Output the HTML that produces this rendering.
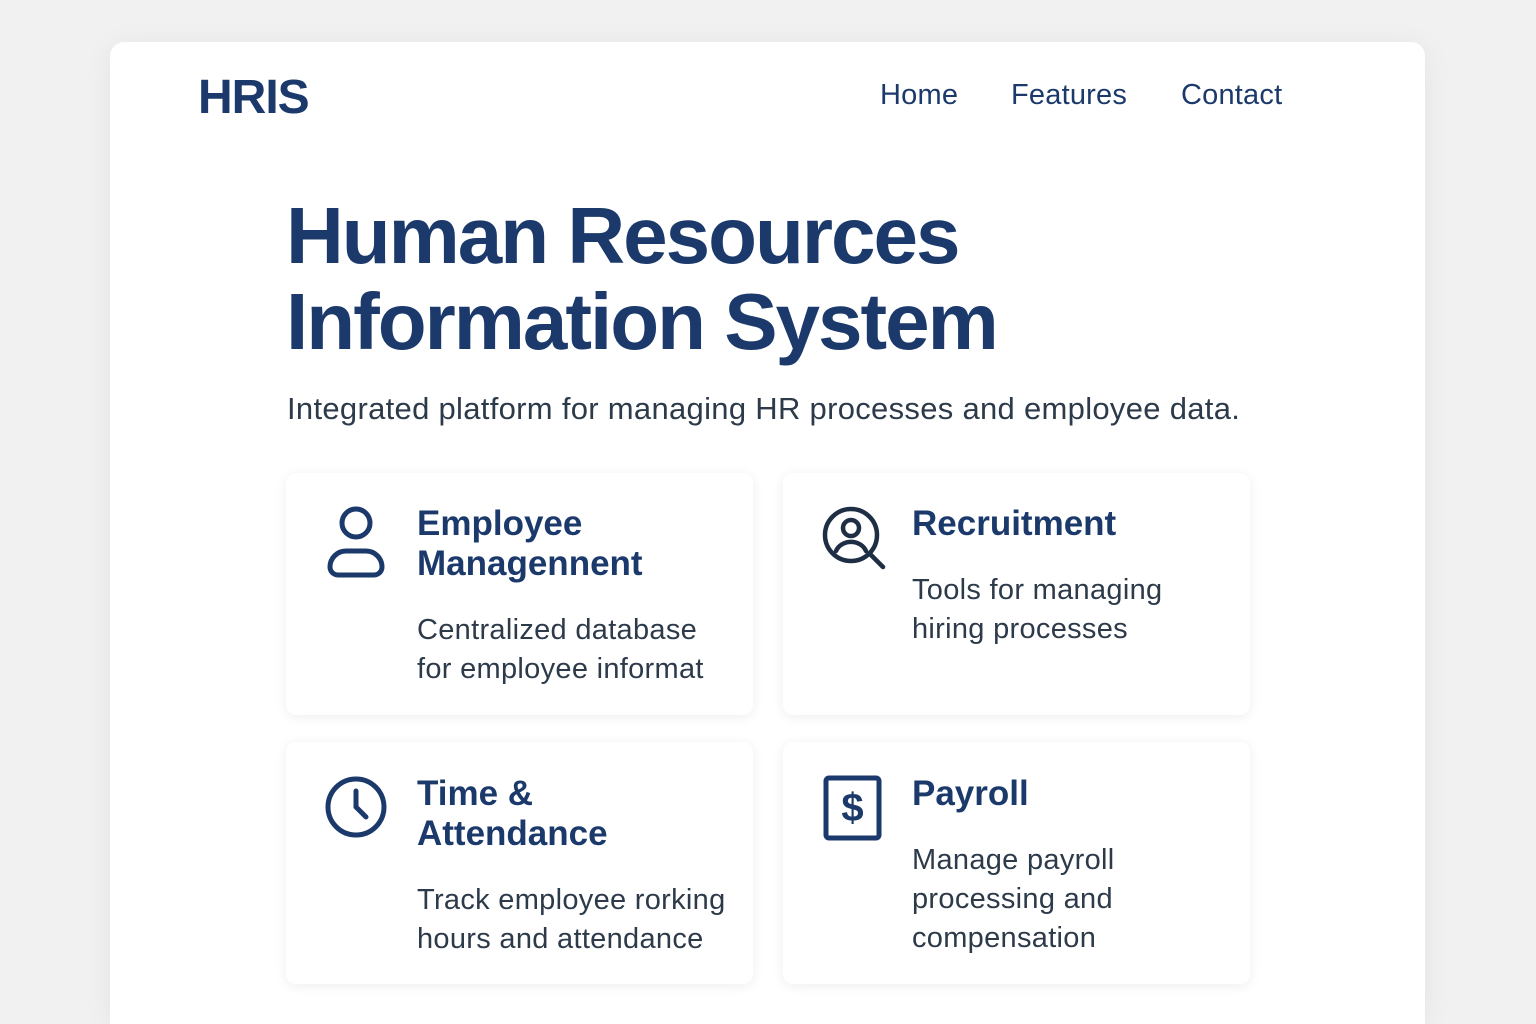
<!DOCTYPE html>
<html><head><style>
*{margin:0;padding:0;box-sizing:border-box}
html,body{width:1536px;height:1024px;overflow:hidden}
body{background:#f1f1f1;font-family:"Liberation Sans",sans-serif;position:relative}
.main{position:absolute;left:110px;top:42px;width:1315px;height:982px;background:#fff;border-radius:14px 14px 0 0;box-shadow:0 4px 30px rgba(0,0,0,.06)}
.abs{position:absolute;white-space:nowrap}
.navy{color:#1b3a6b}
.logo{left:88px;top:28px;font-size:48px;font-weight:bold;letter-spacing:-1px}
.nav{top:37px;font-size:29px;letter-spacing:.2px}
h1{position:absolute;left:176px;top:151px;font-size:80px;line-height:86px;font-weight:bold;color:#1b3a6b;letter-spacing:-2px}
.sub{left:177px;top:349px;font-size:31px;color:#2d3a4a;letter-spacing:.3px}
.card{position:absolute;width:467px;height:242px;background:#fff;border-radius:10px;box-shadow:0 2px 12px rgba(0,0,0,.07)}
.card svg{position:absolute}
.t{position:absolute;font-size:35px;line-height:40px;font-weight:bold;color:#1b3a6b;letter-spacing:0}
.d{position:absolute;font-size:29px;line-height:39px;color:#2d3a4a;letter-spacing:.3px}
</style></head><body>
<div class="main">
<div class="abs navy logo">HRIS</div>
<div class="abs navy nav" style="left:770px">Home</div>
<div class="abs navy nav" style="left:901px">Features</div>
<div class="abs navy nav" style="left:1071px">Contact</div>
<h1>Human Resources<br>Information System</h1>
<div class="abs sub">Integrated platform for managing HR processes and employee data.</div>

<div class="card" style="left:176px;top:431px">
<svg style="left:38px;top:32px" width="64" height="74" viewBox="0 0 64 74"><g fill="none" stroke="#1b3a6b" stroke-width="5"><circle cx="32" cy="18" r="14"/><path d="M14 70 H50 A8 8 0 0 0 58 62 A16 16 0 0 0 42 46 H22 A16 16 0 0 0 6 62 A8 8 0 0 0 14 70 Z"/></g></svg>
<div class="t" style="left:131px;top:31px">Employee<br>Managennent</div>
<div class="d" style="left:131px;top:138px">Centralized database<br>for employee informat</div>
</div>

<div class="card" style="left:673px;top:431px">
<svg style="left:38px;top:32px" width="68" height="68" viewBox="0 0 68 68"><g fill="none" stroke="#1e2e44" stroke-width="4.5" stroke-linecap="round"><circle cx="30" cy="30" r="26"/><circle cx="30" cy="23" r="8"/><path d="M15 46 A16 14 0 0 1 45 46"/><path d="M49 49 L62 62"/></g></svg>
<div class="t" style="left:129px;top:31px">Recruitment</div>
<div class="d" style="left:129px;top:98px">Tools for managing<br>hiring processes</div>
</div>

<div class="card" style="left:176px;top:700px">
<svg style="left:38px;top:33px" width="64" height="64" viewBox="0 0 64 64"><g fill="none" stroke="#1b3a6b" stroke-width="5" stroke-linecap="round"><circle cx="32" cy="32" r="28"/><path d="M32 16 V32 L42 42"/></g></svg>
<div class="t" style="left:131px;top:32px">Time &amp;<br>Attendance</div>
<div class="d" style="left:131px;top:139px">Track employee rorking<br>hours and attendance</div>
</div>

<div class="card" style="left:673px;top:700px">
<svg style="left:40px;top:33px" width="60" height="66" viewBox="0 0 60 66"><rect x="3" y="3" width="53" height="60" rx="3" fill="none" stroke="#1b3a6b" stroke-width="5"/><text x="29.5" y="46" text-anchor="middle" font-family="Liberation Sans" font-weight="bold" font-size="40" fill="#1b3a6b">$</text></svg>
<div class="t" style="left:129px;top:32px">Payroll</div>
<div class="d" style="left:129px;top:99px">Manage payroll<br>processing and<br>compensation</div>
</div>
</div>
</body></html>
